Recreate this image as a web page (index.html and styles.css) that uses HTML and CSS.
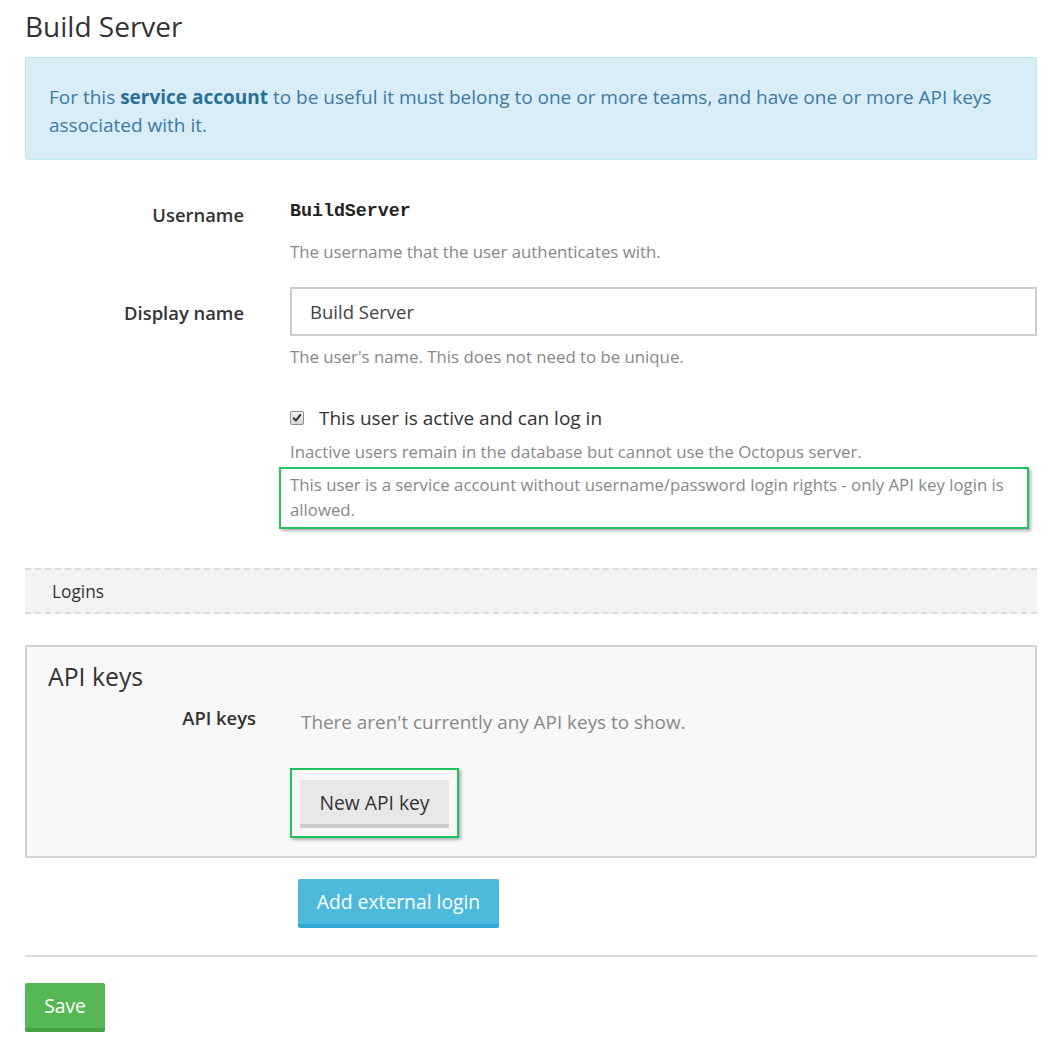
FILE: index.html
```html
<!DOCTYPE html>
<html lang="en">
<head>
<meta charset="utf-8">
<title>Build Server</title>
<link rel="stylesheet" href="styles.css">
</head>
<body>
<div class="page">
  <h1 class="title">Build Server</h1>

  <div class="alert">For this <strong>service account</strong> to be useful it must belong to one or more teams, and have one or more API keys associated with it.</div>

  <div class="form">
    <div class="row row-username">
      <div class="label">Username</div>
      <div class="value">
        <div class="mono">BuildServer</div>
        <div class="help help-first">The username that the user authenticates with.</div>
      </div>
    </div>

    <div class="row row-display">
      <div class="label label-input">Display name</div>
      <div class="value">
        <div class="input">Build Server</div>
        <div class="help help-under-input">The user's name. This does not need to be unique.</div>
      </div>
    </div>

    <div class="row row-active">
      <div class="label"></div>
      <div class="value">
        <label class="check">
          <span class="checkbox"><svg viewBox="0 0 14 14" width="14" height="14"><path d="M3.2 7.4 L5.8 10 L10.8 3.4" fill="none" stroke="#333" stroke-width="2.4" stroke-linecap="round" stroke-linejoin="round"/></svg></span>
          <span class="check-text">This user is active and can log in</span>
        </label>
        <div class="help help-check">Inactive users remain in the database but cannot use the Octopus server.</div>
        <div class="highlight help">This user is a service account without username/password login rights - only API key login is allowed.</div>
      </div>
    </div>
  </div>

  <div class="tabs"><span class="tab">Logins</span></div>

  <div class="panel">
    <h2 class="panel-title">API keys</h2>
    <div class="panel-row">
      <div class="panel-label">API keys</div>
      <div class="panel-value">
        <div class="empty">There aren't currently any API keys to show.</div>
        <div class="highlight-btn"><button class="btn btn-default" type="button">New API key</button></div>
      </div>
    </div>
  </div>

  <div class="row row-external">
    <div class="label"></div>
    <div class="value"><button class="btn btn-info" type="button">Add external login</button></div>
  </div>

  <hr class="divider">

  <button class="btn btn-success" type="button">Save</button>
</div>
</body>
</html>
```

FILE: styles.css
```css
* { box-sizing: border-box; }

body {
  margin: 0;
  background: #fff;
  color: #333;
  font-family: "Open Sans", "Noto Sans", sans-serif;
  font-size: 18.6px;
}

.page {
  padding: 0 20px 0 25px;
}

.title {
  margin: 8px 0 13px 0;
  font-size: 28px;
  line-height: 36px;
  font-weight: 400;
  color: #333;
}

.alert {
  height: 103px;
  padding: 25px 23px 20px 23px;
  border: 1px solid #bce8f1;
  border-radius: 2px;
  background: #d9edf7;
  color: #3a7ba4;
  font-size: 19px;
  line-height: 28px;
}

.alert strong {
  color: #2a6f96;
  font-weight: 700;
}

.form {
  padding-top: 39px;
}

.row {
  display: grid;
  grid-template-columns: 219px 1fr;
  column-gap: 46px;
}

.label {
  text-align: right;
  font-weight: 600;
  font-size: 18.4px;
  line-height: 24px;
  padding-top: 4px;
  color: #333;
}

.mono {
  font-family: "Liberation Mono", "DejaVu Sans Mono", monospace;
  font-weight: 700;
  font-size: 18.3px;
  line-height: 24px;
  color: #222;
}

.help {
  font-size: 16.8px;
  line-height: 22px;
  color: #888;
}

.help-first { margin-top: 18px; }

.row-display { margin-top: 24px; }

.label-input { padding-top: 14px; }

.input {
  height: 49px;
  border: 2px solid #ccc;
  padding: 0 18px;
  font-size: 18.5px;
  line-height: 45px;
  color: #444;
  background: #fff;
}

.help-under-input { margin-top: 10px; }

.row-active { margin-top: 37px; }

.check {
  display: flex;
  align-items: center;
  height: 26px;
  gap: 15px;
}

.checkbox {
  display: block;
  width: 14px;
  height: 14px;
  border: 1px solid #8d8d8d;
  border-radius: 2px;
  background: linear-gradient(#f2f2f2, #d8d8d8);
  line-height: 0;
}

.checkbox svg {
  display: block;
  width: 12px;
  height: 12px;
}

.check-text {
  font-size: 19px;
  line-height: 26px;
  color: #333;
}

.help-check { margin-top: 10px; }

.highlight {
  width: 750px;
  margin: 4px 0 0 -11px;
  padding: 3px 4px 5px 9px;
  border: 2px solid #1fc45d;
  box-shadow: 2px 2px 3px rgba(0, 0, 0, 0.3);
  line-height: 25px;
}

.tabs {
  margin-top: 39px;
  height: 46px;
  border-top: 2px dashed #dcdcdc;
  border-bottom: 2px dashed #dcdcdc;
  background: #f3f3f3;
  padding-left: 27px;
  display: flex;
  align-items: center;
}

.tab {
  font-size: 17.3px;
  color: #333;
}

.panel {
  margin-top: 31px;
  height: 213px;
  border: 2px solid #d2d2d2;
  border-radius: 2px;
  background: #f8f8f8;
  padding: 12px 21px 0 21px;
}

.panel-title {
  margin: 0;
  font-size: 24.8px;
  line-height: 34px;
  font-weight: 400;
  color: #333;
}

.panel-row {
  margin-top: 13px;
  display: grid;
  grid-template-columns: 208px 1fr;
  column-gap: 45px;
}

.panel-label {
  text-align: right;
  font-weight: 600;
  font-size: 18.4px;
  line-height: 24px;
  color: #333;
}

.empty {
  padding-top: 4px;
  font-size: 18.9px;
  line-height: 24px;
  color: #888;
}

.highlight-btn {
  display: inline-block;
  margin: 34px 0 0 -11px;
  padding: 10px 8px 8px 8px;
  border: 2px solid #1fc45d;
  box-shadow: 2px 2px 3px rgba(0, 0, 0, 0.3);
  line-height: 0;
}

.btn {
  display: inline-block;
  border: 0;
  border-radius: 2px;
  font-family: inherit;
  font-size: 19.3px;
  cursor: pointer;
}

.btn-default {
  width: 149px;
  height: 48px;
  background: #e8e8e8;
  border-bottom: 4px solid #cbcbcb;
  color: #333;
  padding: 0;
}

.row-external { margin-top: 21px; }

.btn-info {
  margin-left: 8px;
  width: 201px;
  height: 49px;
  background: #4ebadb;
  border-bottom: 4px solid #2eabd4;
  color: #fff;
  padding: 0;
}

.divider {
  margin: 27px 0 26px 0;
  border: 0;
  border-top: 2px solid #ddd;
  height: 0;
}

.btn-success {
  width: 80px;
  height: 49px;
  background: #55b655;
  border-bottom: 4px solid #45a045;
  color: #fff;
  padding: 0;
}
```
